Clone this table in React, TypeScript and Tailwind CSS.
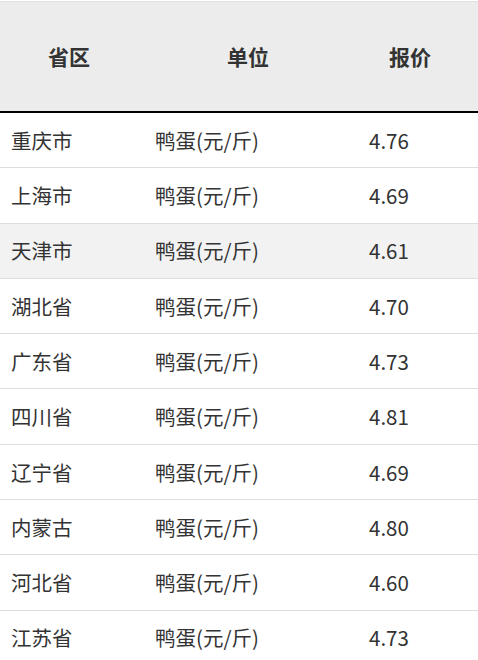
import React from 'react';

const rows: { province: string; price: string }[] = [
  { province: '重庆市', price: '4.76' },
  { province: '上海市', price: '4.69' },
  { province: '天津市', price: '4.61' },
  { province: '湖北省', price: '4.70' },
  { province: '广东省', price: '4.73' },
  { province: '四川省', price: '4.81' },
  { province: '辽宁省', price: '4.69' },
  { province: '内蒙古', price: '4.80' },
  { province: '河北省', price: '4.60' },
  { province: '江苏省', price: '4.73' },
];

const App: React.FC = () => {
  return (
    <div
      className="w-[478px] h-[660px] overflow-hidden bg-white text-[#333]"
      style={{ fontFamily: '"Microsoft YaHei", "Noto Sans CJK SC", sans-serif' }}
    >
      {/* Header */}
      <div className="mt-px border-t border-[#e0e0e0] bg-[#ececec] border-b-2 border-b-black">
        <div className="grid grid-cols-[138px_220px_104px] h-[109px] items-center text-[21px] font-bold text-center">
          <div>省区</div>
          <div>单位</div>
          <div>报价</div>
        </div>
      </div>

      {/* Body */}
      {rows.map((r, i) => (
        <div
          key={r.province}
          className={`grid grid-cols-[144px_214px_1fr] h-[55.3px] items-center border-b border-[#dddddd] text-[20.5px] ${i === 2 ? 'bg-[#f2f2f2]' : 'bg-white'}`}
        >
          <div className="pl-[11px]">{r.province}</div>
          <div className="pl-[11px]">鸭蛋(元/斤)</div>
          <div className="pl-[11px]">{r.price}</div>
        </div>
      ))}
    </div>
  );
};

export default App;
